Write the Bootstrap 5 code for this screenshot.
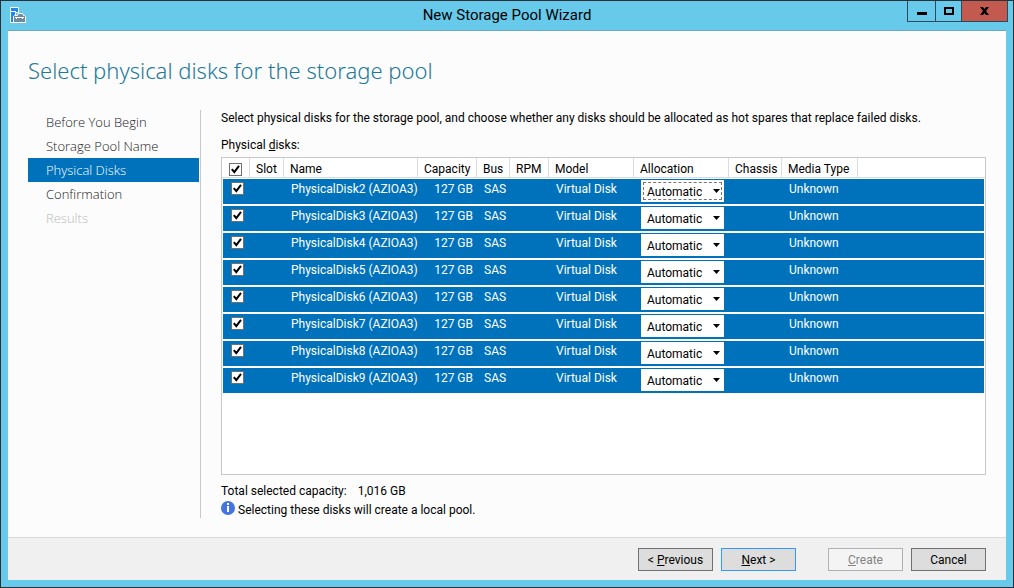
<!DOCTYPE html>
<html lang="en">
<head>
<meta charset="utf-8">
<meta name="viewport" content="width=device-width, initial-scale=1">
<title>New Storage Pool Wizard</title>
<link rel="stylesheet" href="https://cdn.jsdelivr.net/npm/bootstrap@5.3.0/dist/css/bootstrap.min.css">
<style>
  body { font: 12px/16px Roboto, "Noto Sans", sans-serif; color: #000; background: #67caea; }
  .window { border: 1px solid #2d3036; padding: 0 7px 7px; background: #67caea; }
  .titlebar { display: grid; grid-template-columns: 1fr auto 1fr; height: 29px; }
  .titlebar h1 { font: 400 15px/29px Roboto, sans-serif; margin: 0; }
  .app-icon { margin: 6px 0 0 2px; }
  .win-buttons { height: 21px; border: 1px solid #2f4a57; border-top: 0; margin-right: -2px; }
  .win-buttons button { border: 0; padding: 0; width: 27px; background: #67caea; display: flex; align-items: center; justify-content: center; }
  .win-buttons button + button { width: 26px; border-left: 1px solid #2f4a57; }
  .win-buttons button.win-close { width: 46px; background: #c35a50; }
  .pane { background: #fcfcfc; border-top: 1px solid #6fa9c0; }
  .page-title { font: 300 22px/32px "Noto Sans", sans-serif; color: #1b7a9a; margin: 0; padding: 23px 20px 24px; }
  .page-body { padding: 0 20px 19px; }
  .steps { width: 173px; border-right: 1px solid #c8c8c8; }
  .steps .nav-link { font: 300 13px/24px "Open Sans", sans-serif; padding: 0 18px; margin-right: 1px; color: #222; }
  .steps .nav-link.active { background: #0072bc; color: #fff; }
  .steps .nav-link.disabled { color: #bbb; }
  .intro { margin: 0 0 11px; }
  .disks-label { margin-bottom: 4px; }
  .disk-box { border: 1px solid #c8c8c8; background: #fff; min-height: 240px; }
  .disk-table { table-layout: fixed; width: 100%; border-collapse: separate; border-spacing: 0; white-space: nowrap; }
  .disk-table th { font-weight: 400; height: 20px; padding: 3px 0 0 6px; line-height: 16px; border-right: 1px solid #dcdcdc; border-bottom: 1px solid #dcdcdc; }
  .disk-table th:last-child { border-right: 0; }
  .disk-table td { height: 27px; padding: 2px 0 0 7px; vertical-align: top; color: #fff; background: #0072bc; border-bottom: 2px solid #fff; }
  .disk-table td:first-child { border-left: 1px solid #fff; padding-left: 6px; }
  .disk-table td:last-child { border-right: 1px solid #fff; }
  .disk-table tbody tr:first-child td { border-top: 1px solid #fff; height: 28px; }
  .disk-table input { appearance: none; display: block; width: 13px; height: 13px; margin: 1px 0 0 2px; border: 1px solid #707070; background: #fff; }
  .disk-table th input { margin: 0 0 0 1px; }
  .disk-table input:checked { background: #fff url("data:image/svg+xml,%3Csvg xmlns='http://www.w3.org/2000/svg' viewBox='0 0 11 11'%3E%3Cpath d='M1.8 5.2 4.3 8.2 9 1.8' fill='none' stroke='%23000' stroke-width='2'/%3E%3C/svg%3E"); }
  .disk-table select { appearance: none; display: block; width: 83px; height: 22px; border: 0; border-radius: 0; padding: 1px 16px 0 6px; color: #000; font: inherit; background: #fff url("data:image/svg+xml,%3Csvg xmlns='http://www.w3.org/2000/svg' width='7' height='4'%3E%3Cpath d='M0 0h7L3.5 4z'/%3E%3C/svg%3E") no-repeat right 4px center; }
  .disk-table td.alloc { padding-top: 1px; }
  .disk-table select.focused { outline: 1px dashed #777; outline-offset: -3px; }
  .summary { gap: 11px; margin: 8px 0 3px; }
  .info-note { gap: 3px; }
  .info-icon { flex: none; margin-top: -1px; }
  .footer-bar { background: #f0f0f0; border-top: 1px solid #dadada; padding: 10px 20px 9px; }
  .wiz { width: 75px; height: 23px; border: 1px solid #707070; border-radius: 0; background: #ddd; padding: 0; font-size: 12px; line-height: 16px; color: #000; }
  .wiz.default { border-color: #3399ff; }
  .wiz:disabled { background: #f4f4f4; border-color: #adb2b5; color: #838383; opacity: 1; }
</style>
</head>
<body>
<div class="window d-flex flex-column min-vh-100">
  <header class="titlebar">
    <svg class="app-icon" width="17" height="17" viewBox="0 0 17 17" aria-hidden="true">
      <path d="M.5.5h8v5h-3v10h-5z" fill="#1e8be0" stroke="#fff"/>
      <path d="M1 4.500h5" stroke="#fff"/>
      <path d="M3.500 9.500 4.500 8.500h3l1-2h4l1 2h1l1 1v6h-12z" fill="#708a9e" stroke="#fff"/>
      <path d="M5 10.500h9M6.500 10v2M12.500 10v2" fill="none" stroke="#fff"/>
    </svg>
    <h1>New Storage Pool Wizard</h1>
    <div class="win-buttons d-flex ms-auto">
      <button type="button" aria-label="Minimize"><svg width="10" height="10"><path d="M0 6h10v3H0z"/></svg></button>
      <button type="button" aria-label="Maximize"><svg width="10" height="8"><path d="M1 1h8v6H1z" fill="none" stroke="#000" stroke-width="2"/></svg></button>
      <button type="button" class="win-close" aria-label="Close"><svg width="9" height="8"><path d="M0 0h3l1.500 2L6 0h3L6 4l3 4H6L4.500 6 3 8H0l3-4z"/></svg></button>
    </div>
  </header>

  <main class="pane flex-grow-1 d-flex flex-column">
    <h2 class="page-title">Select physical disks for the storage pool</h2>
    <div class="page-body flex-grow-1 d-flex">
      <nav class="steps nav flex-column flex-nowrap flex-shrink-0" aria-label="Wizard steps">
        <a class="nav-link" href="#">Before You Begin</a>
        <a class="nav-link" href="#">Storage Pool Name</a>
        <a class="nav-link active" href="#" aria-current="step">Physical Disks</a>
        <a class="nav-link" href="#">Confirmation</a>
        <a class="nav-link disabled" href="#" aria-disabled="true">Results</a>
      </nav>
      <section class="flex-grow-1 d-flex flex-column ps-3 ms-1">
        <p class="intro">Select physical disks for the storage pool, and choose whether any disks should be allocated as hot spares that replace failed disks.</p>
        <div class="disks-label" id="disks-label">Physical <u>d</u>isks:</div>
        <div class="disk-box flex-grow-1">
          <table class="disk-table" aria-labelledby="disks-label">
            <colgroup>
              <col style="width:28px"><col style="width:34px"><col style="width:134px"><col style="width:59px"><col style="width:33px"><col style="width:39px"><col style="width:85px"><col style="width:95px"><col style="width:53px"><col style="width:76px"><col>
            </colgroup>
            <thead>
              <tr><th><input type="checkbox" checked aria-label="Select all disks"></th><th>Slot</th><th>Name</th><th>Capacity</th><th>Bus</th><th>RPM</th><th>Model</th><th>Allocation</th><th>Chassis</th><th>Media Type</th><th></th></tr>
            </thead>
            <tbody id="disks"></tbody>
          </table>
        </div>
        <div class="summary d-flex"><span>Total selected capacity:</span><span>1,016 GB</span></div>
        <div class="info-note d-flex">
          <svg class="info-icon" width="14" height="14" viewBox="0 0 14 14" aria-hidden="true"><circle cx="7" cy="7" r="7" fill="#4474e0"/><path d="M6 2h2v2H6zM6 5h2v6H6z" fill="#fff"/></svg>
          <span>Selecting these disks will create a local pool.</span>
        </div>
      </section>
    </div>
    <footer class="footer-bar d-flex justify-content-end gap-2">
      <button type="button" class="btn wiz">&lt; <u>P</u>revious</button>
      <button type="button" class="btn wiz default"><u>N</u>ext &gt;</button>
      <button type="button" class="btn wiz ms-4" disabled><u>C</u>reate</button>
      <button type="button" class="btn wiz">Cancel</button>
    </footer>
  </main>
</div>
<script src="https://cdn.jsdelivr.net/npm/bootstrap@5.3.0/dist/js/bootstrap.bundle.min.js"></script>
<script>
  const rows = [2, 3, 4, 5, 6, 7, 8, 9].map(n => `<tr>
    <td><input type="checkbox" checked aria-label="Select PhysicalDisk${n}"></td><td></td>
    <td>PhysicalDisk${n} (AZIOA3)</td><td class="text-end pe-1">127 GB</td><td>SAS</td><td></td><td>Virtual Disk</td>
    <td class="alloc"><select class="${n === 2 ? "focused" : ""}" aria-label="Allocation of PhysicalDisk${n}"><option>Automatic</option><option>Hot Spare</option><option>Manual</option></select></td>
    <td></td><td>Unknown</td><td></td></tr>`);
  document.getElementById("disks").innerHTML = rows.join("");
</script>
</body>
</html>
